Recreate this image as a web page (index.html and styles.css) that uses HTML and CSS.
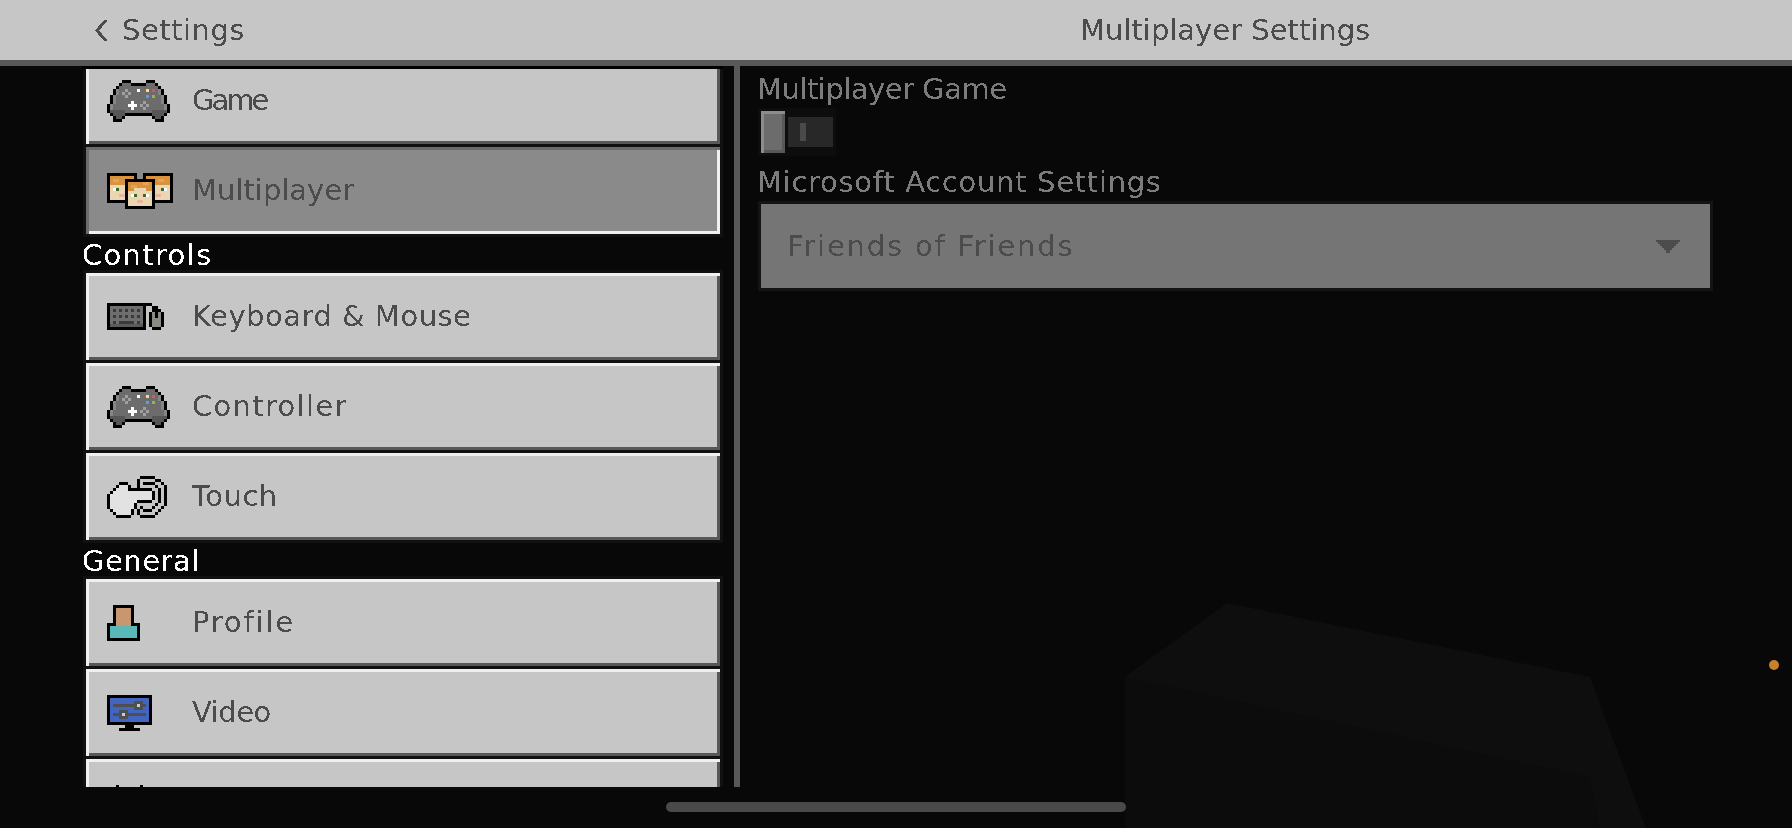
FILE: index.html
```html
<!DOCTYPE html>
<html lang="en">
<head>
  <meta charset="UTF-8">
  <meta name="viewport" content="width=device-width, initial-scale=1.0">
  <title>Multiplayer Settings</title>
  <link rel="stylesheet" href="styles.css">
</head>
<body>
  <!-- shared bits: hard-edge text filter and the controller sprite -->
  <svg class="defs" aria-hidden="true">
    <filter id="hard" color-interpolation-filters="sRGB">
      <feComponentTransfer><feFuncA type="discrete" tableValues="0 0 1 1"/></feComponentTransfer>
    </filter>
    <symbol id="pad" viewBox="0 0 21 14">
      <path fill="#000" d="M5 0h3v1h-3zM13 0h3v1h-3zM4 1h13v1h-13zM3 2h15v1h-15zM2 3h17v2h-17zM1 5h19v3h-19zM0 8h21v3h-21zM1 11h19v1h-19zM2 12h4v1h-4zM15 12h4v1h-4zM2 13h3v1h-3zM16 13h3v1h-3z"/>
      <path fill="#6c6c6c" d="M5 1h3v1h-3zM13 1h3v1h-3zM4 2h13v1h-13zM3 3h15v2h-15zM2 5h17v3h-17zM1 8h19v3h-19zM2 11h4v1h-4zM15 11h4v1h-4zM3 12h2v1h-2zM16 12h2v1h-2z"/>
      <path fill="#858585" d="M3 3h1v2h-1zM2 5h1v3h-1zM1 8h1v2h-1zM17 3h1v2h-1zM18 5h1v3h-1zM19 8h1v2h-1z"/>
      <path fill="#565656" d="M1 10h5v1h-5zM15 10h5v1h-5zM2 11h4v1h-4zM15 11h4v1h-4zM3 12h2v1h-2zM16 12h2v1h-2z"/>
      <path fill="#a0a0a0" d="M6 3h1v1h-1zM5 4h1v1h-1zM7 4h1v1h-1zM6 5h1v1h-1zM12 7h1v1h-1zM11 8h1v1h-1zM13 8h1v1h-1zM12 9h1v1h-1z"/>
      <path fill="#fff" d="M10 3h1v1h-1zM8 7h1v1h-1zM7 8h3v1h-3zM8 9h1v1h-1z"/>
      <path fill="#f2e07a" d="M13 3h1v1h-1z"/>
      <path fill="#d8566c" d="M15 3h1v1h-1z"/>
      <path fill="#5aa0e0" d="M13 5h1v1h-1z"/>
      <path fill="#94b060" d="M15 5h1v1h-1z"/>
    </symbol>
  </svg>

  <svg class="scene" viewBox="0 0 1792 828" aria-hidden="true">
    <polygon fill="#0e0e0e" points="1227,603 1590,677 1646,828 1125,828 1125,677"/>
    <polygon fill="#0c0c0c" points="1125,677 1590,777 1600,828 1125,828"/>
  </svg>

  <header class="topbar">
    <div class="back">
      <svg class="px" width="12" height="21" viewBox="0 0 12 21"><polyline fill="none" stroke="#4c4c4c" stroke-width="3" points="11,0 2,10.5 11,21"/></svg>
      <span class="txt">Settings</span>
    </div>
    <div class="page-title txt ls-snug">Multiplayer Settings</div>
  </header>

  <main class="content">
    <nav class="side">
      <div class="side-scroll">
        <div class="group">
          <div class="row">
            <span class="icon"><svg class="px" width="63" height="42"><use href="#pad"/></svg></span>
            <span class="txt ls-squeeze">Game</span>
          </div>
          <div class="row active">
            <span class="icon">
              <svg class="px" width="66" height="36" viewBox="0 0 22 12">
                <path fill="#000" d="M0 0h10v10h-10zM12 0h10v10h-10z"/>
                <path fill="#ecd6b2" d="M1 1h8v8h-8zM13 1h8v8h-8z"/>
                <path fill="#d9933f" d="M1 1h8v3h-8zM13 1h8v3h-8z"/>
                <path fill="#e3a555" d="M2 2h2v1h-2zM17 2h2v1h-2z"/>
                <path fill="#fff" d="M2 5h1v1h-1zM19 5h1v1h-1z"/>
                <path fill="#3b6a26" d="M3 5h1v1h-1zM18 5h1v1h-1z"/>
                <path fill="#e8b4a0" d="M4 7h2v1h-2zM16 7h2v1h-2z"/>
                <path fill="#000" d="M6 2h10v10h-10z"/>
                <path fill="#ecd6b2" d="M7 3h8v8h-8z"/>
                <path fill="#d9933f" d="M7 3h8v2h-8zM7 5h2v1h-2zM13 5h2v1h-2z"/>
                <path fill="#e3a555" d="M8 4h2v1h-2zM12 3h2v1h-2z"/>
                <path fill="#fff" d="M8 7h1v1h-1zM13 7h1v1h-1z"/>
                <path fill="#3b6a26" d="M9 7h1v1h-1zM12 7h1v1h-1z"/>
                <path fill="#e8b4a0" d="M10 9h2v1h-2z"/>
              </svg>
            </span>
            <span class="txt ls-snug">Multiplayer</span>
          </div>
        </div>

        <div class="section txt ls-wide">Controls</div>
        <div class="group">
          <div class="row">
            <span class="icon">
              <svg class="px" width="57" height="27" viewBox="0 0 19 9">
                <path fill="#000" d="M0 0h13v9h-13zM13 0h2v1h-2zM15 1h2v1h-2zM15 2h3v1h-3zM14 3h5v5h-5zM15 8h3v1h-3z"/>
                <path fill="#6e6e6e" d="M1 1h11v7h-11z"/>
                <path fill="#5a5a5a" d="M1 7h11v1h-11z"/>
                <path fill="#3a3a3a" d="M2 2h1v1h-1zM4 2h1v1h-1zM6 2h1v1h-1zM8 2h1v1h-1zM10 2h1v1h-1zM2 4h1v1h-1zM4 4h1v1h-1zM6 4h1v1h-1zM8 4h1v1h-1zM10 4h1v1h-1zM2 6h1v1h-1zM4 6h5v1h-5zM10 6h1v1h-1z"/>
                <path fill="#8a8a84" d="M15 3h3v5h-3z"/>
                <path fill="#000" d="M16 3h1v2h-1z"/>
              </svg>
            </span>
            <span class="txt">Keyboard &amp; Mouse</span>
          </div>
          <div class="row">
            <span class="icon"><svg class="px" width="63" height="42"><use href="#pad"/></svg></span>
            <span class="txt ls-wide">Controller</span>
          </div>
          <div class="row">
            <span class="icon">
              <svg class="px" width="60" height="42" viewBox="0 0 20 14">
                <path fill="#e2e2e2" d="M4 3h3v1h-3zM3 4h4v1h-4zM2 5h13v1h-13zM1 6h14v2h-14zM1 8h9v1h-9zM1 9h8v2h-8zM2 11h6v1h-6zM3 12h5v1h-5z"/>
                <path fill="#000" d="M4 2h3v1h-3zM3 3h1v1h-1zM7 3h1v1h-1zM2 4h1v1h-1zM7 4h8v1h-8zM1 5h1v1h-1zM15 5h1v3h-1zM0 6h1v5h-1zM10 8h5v1h-5zM9 9h1v2h-1zM1 11h1v1h-1zM8 11h1v2h-1zM2 12h1v1h-1zM3 13h5v1h-5z"/>
                <path fill="#000" d="M11 0h5v1h-5zM10 1h1v3h-1zM16 1h2v1h-2zM18 2h1v1h-1zM19 3h1v7h-1zM18 10h1v1h-1zM17 11h1v1h-1zM16 12h1v1h-1zM11 13h5v1h-5zM10 11h1v2h-1z"/>
                <path fill="#000" d="M12 2h4v1h-4zM16 3h1v1h-1zM17 4h1v5h-1zM16 9h1v1h-1zM15 10h1v1h-1zM12 11h3v1h-3zM11 10h1v1h-1z"/>
              </svg>
            </span>
            <span class="txt">Touch</span>
          </div>
        </div>

        <div class="section txt">General</div>
        <div class="group">
          <div class="row">
            <span class="icon">
              <svg class="px" width="33" height="36" viewBox="0 0 11 12">
                <path fill="#000" d="M2 0h7v6h-7zM0 6h11v6h-11z"/>
                <path fill="#c8966f" d="M3 1h5v6h-5z"/>
                <path fill="#58b9b6" d="M1 7h9v4h-9z"/>
              </svg>
            </span>
            <span class="txt ls-wider">Profile</span>
          </div>
          <div class="row">
            <span class="icon">
              <svg class="px" width="45" height="36" viewBox="0 0 15 12">
                <path fill="#000" d="M0 0h15v10h-15zM6 10h3v1h-3zM4 11h7v1h-7z"/>
                <path fill="#4265c0" d="M1 1h13v8h-13z"/>
                <path fill="#4f4f4f" d="M2 3h11v1h-11zM2 6h11v1h-11zM9 2h3v3h-3zM4 5h3v3h-3z"/>
                <path fill="#ccc" d="M10 3h1v1h-1zM5 6h1v1h-1z"/>
              </svg>
            </span>
            <span class="txt ls-tight">Video</span>
          </div>
          <!-- third row is cut off by the list edge, only its icon top shows -->
          <div class="row">
            <span class="icon">
              <svg class="px" width="45" height="36" viewBox="0 0 15 12">
                <path fill="#000" d="M3 0h1v1h-1zM11 0h1v1h-1zM0 1h15v11h-15z"/>
              </svg>
            </span>
          </div>
        </div>
      </div>
    </nav>

    <section class="panel">
      <div class="field-label txt ls-tight">Multiplayer Game</div>
      <div class="toggle">
        <div class="toggle-knob"></div>
        <div class="toggle-track"><span class="toggle-mark"></span></div>
      </div>
      <div class="field-label txt ls-mid">Microsoft Account Settings</div>
      <div class="select">
        <span class="txt ls-wider">Friends of Friends</span>
        <svg class="px" width="24" height="13" viewBox="0 0 24 13"><path fill="#4c4c4c" d="M0 0h24v2h-24zM2 2h20v2h-20zM4 4h16v2h-16zM6 6h12v2h-12zM8 8h8v2h-8zM10 10h4v3h-4z"/></svg>
      </div>
    </section>
  </main>

  <div class="home-bar"></div>
  <div class="mic-dot"></div>
</body>
</html>
```

FILE: styles.css
```css
html, body {
  margin: 0;
  height: 100%;
}
body {
  width: 1792px;
  height: 828px;
  overflow: hidden;
  position: relative;
  background: #080808;
  font-family: "DejaVu Sans", sans-serif;
  font-size: 29px;
  letter-spacing: 0.5px;
  color: #4c4c4c;
  display: flex;
  flex-direction: column;
}
.defs {
  position: absolute;
  width: 0;
  height: 0;
}
.scene {
  position: absolute;
  left: 0;
  top: 0;
  width: 1792px;
  height: 828px;
}
.px {
  display: block;
  shape-rendering: crispEdges;
}
.txt {
  filter: url(#hard);
  white-space: nowrap;
  margin-left: -1px;
}

/* the game font runs wider or narrower than DejaVu depending on the word */
.ls-squeeze { letter-spacing: -3px; }
.ls-tight { letter-spacing: -0.5px; }
.ls-snug { letter-spacing: 0; }
.ls-mid { letter-spacing: 0.7px; }
.ls-wide { letter-spacing: 1.3px; }
.ls-wider { letter-spacing: 1.8px; }

/* top bar */
.topbar {
  position: relative;
  height: 60px;
  flex: none;
  background: #c6c6c6;
  border-bottom: 6px solid #585858;
  display: flex;
  align-items: center;
  line-height: 30px;
}
.back {
  width: 1080px;
  padding-left: 95px;
  box-sizing: border-box;
  display: flex;
  align-items: center;
  gap: 16px;
}
.page-title {
  margin-left: 0;
}

/* main area */
.content {
  position: relative;
  height: 721px;
  flex: none;
  display: flex;
}
.side {
  width: 640px;
  margin-left: 83px;
  margin-right: 11px;
  flex: none;
}
.side-scroll {
  height: 718px;
  overflow: hidden;
  border-top: 3px solid #000;
}
.group {
  background: #111;
  padding: 3px;
  display: flex;
  flex-direction: column;
  gap: 3px;
}
.side-scroll .group:first-child {
  margin-top: -15px;
}
.section {
  height: 33px;
  line-height: 37px;
  color: #fff;
}
.row {
  height: 87px;
  flex: none;
  background: #c6c6c6;
  box-shadow: inset 3px 3px 0 #f0f0f0, inset -3px -3px 0 #585858;
  padding-left: 21px;
  display: flex;
  align-items: center;
  line-height: 30px;
}
.row .txt {
  margin-top: -2px;
}
.row.active {
  background: #8a8a8a;
  box-shadow: inset 3px 3px 0 #6c6c6c, inset -3px -3px 0 #f0f0f0;
}
.icon {
  width: 86px;
  flex: none;
}

/* right panel */
.panel {
  width: 1058px;
  flex: none;
  border-left: 6px solid #585858;
  padding-left: 18px;
  padding-top: 7px;
  box-sizing: border-box;
  height: 721px;
}
.field-label {
  height: 35px;
  line-height: 32px;
  color: #7c7c7c;
}
.toggle {
  width: 78px;
  height: 48px;
  margin-bottom: 10px;
  background: #0d0d0d;
  display: flex;
  align-items: center;
  padding: 3px;
  box-sizing: border-box;
  gap: 3px;
}
.toggle-knob {
  width: 24px;
  height: 42px;
  box-sizing: border-box;
  background: #6c6c6c;
  box-shadow: inset 3px 3px 0 #8c8c8c, inset -3px -3px 0 #585858;
}
.toggle-track {
  width: 45px;
  height: 30px;
  background: #282828;
  padding: 6px 12px;
  box-sizing: border-box;
}
.toggle-mark {
  display: block;
  width: 6px;
  height: 18px;
  background: #4a4a4a;
}
.select {
  width: 955px;
  height: 90px;
  box-sizing: border-box;
  background: #757575;
  border: 3px solid #141414;
  padding: 0 30px 0 27px;
  display: flex;
  align-items: center;
  justify-content: space-between;
  color: #4c4c4c;
  line-height: 30px;
}

/* system overlays */
.home-bar {
  position: absolute;
  left: 666px;
  top: 802px;
  width: 460px;
  height: 10px;
  border-radius: 5px;
  background: #4a4a4a;
}
.mic-dot {
  position: absolute;
  left: 1769px;
  top: 660px;
  width: 10px;
  height: 10px;
  border-radius: 50%;
  background: #c8812b;
}
```
